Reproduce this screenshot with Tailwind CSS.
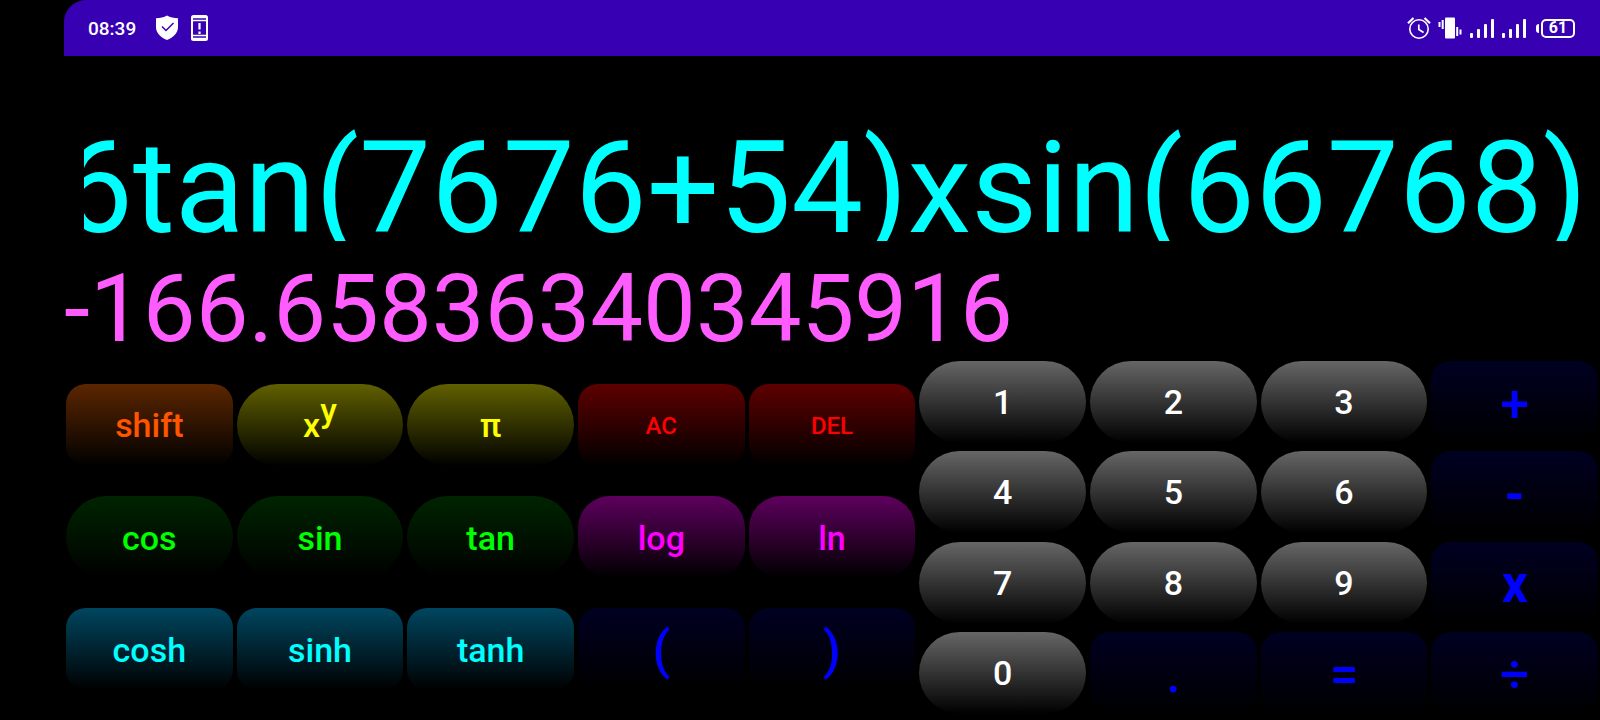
<!DOCTYPE html>
<html lang="en">
<head>
<meta charset="utf-8">
<title>Calculator</title>
<script src="https://cdn.jsdelivr.net/npm/@tailwindcss/browser@4"></script>
</head>
<body class="bg-black">
<div class="flex min-h-screen flex-col bg-black pl-16 font-['Roboto',sans-serif]">

  <!-- Status bar -->
  <header class="flex h-14 items-center justify-between rounded-tl-[22px] bg-[#3700b3] pl-6 pr-[25px] text-white">
    <div class="flex items-center">
      <span class="w-[67px] pt-[2px] text-[19px] leading-6 font-medium">08:39</span>
      <svg class="h-[26px] w-6" viewBox="0 0 24 26" fill="none" aria-hidden="true">
        <path d="M12 .5C9 2.4 5 3.2 1 3.3V12c0 6 4.500 10.500 11 13 6.500-2.500 11-7 11-13V3.300C19 3.200 15 2.400 12 .5Z" fill="#fff"/>
        <path d="m7 11.500 4 4L18.500 8" stroke="#3700b3" stroke-width="1.500"/>
      </svg>
      <svg class="ml-3 h-[26px] w-[17px]" viewBox="0 0 17 26" fill="none" aria-hidden="true">
        <rect x="1" y="1" width="15" height="24" rx="1.500" stroke="#fff" stroke-width="2"/>
        <path d="M1 2.500h15M1 5.500h15M1 20.500h15M1 23.500h15" stroke="#fff" stroke-width="1.400"/>
        <path d="M8.500 8v6.500M8.500 16.500v2.500" stroke="#fff" stroke-width="2.200"/>
      </svg>
    </div>
    <div class="flex items-center">
      <svg class="h-6 w-6" viewBox="0 0 24 24" fill="none" stroke="#fff" aria-hidden="true">
        <circle cx="12" cy="13" r="9.200" stroke-width="1.600"/>
        <path d="M11.800 8.500v5l4.800 3" stroke-width="1.700"/>
        <path d="M1 7.200 6.500 2M23 7.200 17.500 2" stroke-width="2.200"/>
      </svg>
      <svg class="ml-[7px] h-6 w-6" viewBox="0 0 24 24" fill="#fff" aria-hidden="true">
        <rect x="7" y="1.500" width="10" height="21" rx="1"/>
        <rect x="0.500" y="6" width="2" height="5"/><rect x="3.700" y="4" width="2" height="9"/>
        <rect x="18.200" y="11" width="2" height="9"/><rect x="21.500" y="13.500" width="2" height="5"/>
      </svg>
      <svg class="ml-2 h-6 w-6" viewBox="0 0 24 24" fill="#fff" aria-hidden="true">
        <rect x="0" y="17" width="3" height="5" rx="1"/><rect x="7" y="13" width="3" height="9" rx="1"/><rect x="14" y="8" width="3" height="14" rx="1"/><rect x="21" y="3" width="3" height="19" rx="1"/>
      </svg>
      <svg class="ml-2 h-6 w-6" viewBox="0 0 24 24" fill="#fff" aria-hidden="true">
        <rect x="0" y="17" width="3" height="5" rx="1"/><rect x="7" y="13" width="3" height="9" rx="1"/><rect x="14" y="8" width="3" height="14" rx="1"/><rect x="21" y="3" width="3" height="19" rx="1"/>
      </svg>
      <span class="ml-[10px] h-[9px] w-[3px] rounded-l-sm bg-white"></span>
      <span class="ml-[2px] flex h-[19px] w-[34px] items-center justify-center rounded-[5px] border-2 border-white text-[16px] leading-none font-bold">61</span>
    </div>
  </header>

  <main class="flex flex-1 flex-col">
    <!-- Expression and result -->
    <div class="h-[185px] overflow-hidden px-5 pt-[57px]">
      <input type="text" readonly aria-label="Expression" value="6tan(7676+54)xsin(66768)" class="block h-[150px] w-full -indent-[23px] bg-transparent text-[128px] leading-[150px] text-[#00ffff] outline-none">
    </div>
    <output aria-label="Result" class="mt-[21px] block h-[92px] text-[94px] leading-[94px] text-[#ff5cff]">-166.65836340345916</output>

    <!-- Keypad -->
    <div class="grid flex-1 grid-cols-9">
      <div class="col-span-5 grid grid-cols-5 content-between gap-x-1 px-[2px] pt-[30px] pb-[30px] text-[34px] leading-none font-medium">
        <button type="button" class="h-[82px] rounded-[20px] bg-linear-to-b/srgb from-[#5c2600] to-black text-[#ff5500]">shift</button>
        <button type="button" class="h-[82px] rounded-[41px] bg-linear-to-b/srgb from-[#606000] to-black text-[#ffff00]">x<span class="align-[15px] leading-[0px]">y</span></button>
        <button type="button" class="h-[82px] rounded-[41px] bg-linear-to-b/srgb from-[#606000] to-black text-[#ffff00]">π</button>
        <button type="button" class="h-[82px] rounded-[20px] bg-linear-to-b/srgb from-[#5e0000] to-black pt-[2px] text-[24px] text-[#ff0000]">AC</button>
        <button type="button" class="h-[82px] rounded-[20px] bg-linear-to-b/srgb from-[#5e0000] to-black pt-[2px] text-[24px] text-[#ff0000]">DEL</button>

        <button type="button" class="h-[82px] rounded-[41px] bg-linear-to-b/srgb from-[#002400] to-black pt-[2px] text-[#00ff00]">cos</button>
        <button type="button" class="h-[82px] rounded-[41px] bg-linear-to-b/srgb from-[#002400] to-black pt-[2px] text-[#00ff00]">sin</button>
        <button type="button" class="h-[82px] rounded-[41px] bg-linear-to-b/srgb from-[#002400] to-black pt-[2px] text-[#00ff00]">tan</button>
        <button type="button" class="h-[82px] rounded-[32px] bg-linear-to-b/srgb from-[#5e005e] to-black pt-[2px] text-[#ff00ff]">log</button>
        <button type="button" class="h-[82px] rounded-[32px] bg-linear-to-b/srgb from-[#5e005e] to-black pt-[2px] text-[#ff00ff]">ln</button>

        <button type="button" class="h-[82px] rounded-[20px] bg-linear-to-b/srgb from-[#004660] to-black pt-[2px] text-[#00ffff]">cosh</button>
        <button type="button" class="h-[82px] rounded-[20px] bg-linear-to-b/srgb from-[#004660] to-black pt-[2px] text-[#00ffff]">sinh</button>
        <button type="button" class="h-[82px] rounded-[20px] bg-linear-to-b/srgb from-[#004660] to-black pt-[2px] text-[#00ffff]">tanh</button>
        <button type="button" class="h-[82px] rounded-[20px] bg-linear-to-b/srgb from-[#000022] to-black pt-[2px] text-[51px] text-[#0000ff]">(</button>
        <button type="button" class="h-[82px] rounded-[20px] bg-linear-to-b/srgb from-[#000022] to-black pt-[2px] text-[51px] text-[#0000ff]">)</button>
      </div>

      <div class="col-span-4 grid grid-cols-4 content-between gap-x-1 px-[2px] pt-[7px] pb-[6px] text-[34px] leading-none font-medium text-white">
        <button type="button" class="h-[82px] rounded-[41px] bg-linear-to-b/srgb from-[#666666] to-black">1</button>
        <button type="button" class="h-[82px] rounded-[41px] bg-linear-to-b/srgb from-[#666666] to-black">2</button>
        <button type="button" class="h-[82px] rounded-[41px] bg-linear-to-b/srgb from-[#666666] to-black">3</button>
        <button type="button" class="h-[82px] rounded-[20px] bg-linear-to-b/srgb from-[#000022] to-black pt-1 text-[51px] text-[#0000ff]">+</button>
        <button type="button" class="h-[82px] rounded-[41px] bg-linear-to-b/srgb from-[#666666] to-black">4</button>
        <button type="button" class="h-[82px] rounded-[41px] bg-linear-to-b/srgb from-[#666666] to-black">5</button>
        <button type="button" class="h-[82px] rounded-[41px] bg-linear-to-b/srgb from-[#666666] to-black">6</button>
        <button type="button" class="h-[82px] rounded-[20px] bg-linear-to-b/srgb from-[#000022] to-black pt-1 text-[51px] font-bold text-[#0000ff]">-</button>
        <button type="button" class="h-[82px] rounded-[41px] bg-linear-to-b/srgb from-[#666666] to-black">7</button>
        <button type="button" class="h-[82px] rounded-[41px] bg-linear-to-b/srgb from-[#666666] to-black">8</button>
        <button type="button" class="h-[82px] rounded-[41px] bg-linear-to-b/srgb from-[#666666] to-black">9</button>
        <button type="button" class="h-[82px] rounded-[20px] bg-linear-to-b/srgb from-[#000022] to-black pt-1 text-[51px] font-bold text-[#0000ff]">x</button>
        <button type="button" class="h-[82px] rounded-[41px] bg-linear-to-b/srgb from-[#666666] to-black">0</button>
        <button type="button" class="h-[82px] rounded-[20px] bg-linear-to-b/srgb from-[#000022] to-black pt-1 text-[51px] text-[#0000ff]">.</button>
        <button type="button" class="h-[82px] rounded-[20px] bg-linear-to-b/srgb from-[#000022] to-black pt-1 text-[51px] text-[#0000ff]">=</button>
        <button type="button" class="h-[82px] rounded-[20px] bg-linear-to-b/srgb from-[#000022] to-black pt-1 text-[51px] text-[#0000ff]">÷</button>
      </div>
    </div>
  </main>
</div>
</body>
</html>
